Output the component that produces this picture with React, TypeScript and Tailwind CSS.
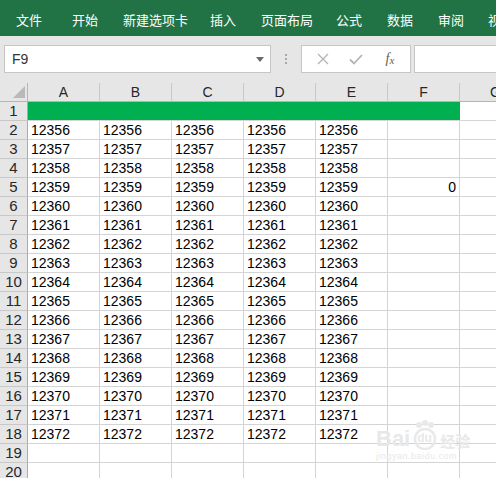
import React from "react";

const tabs: { label: string; w: number }[] = [
  { label: "文件", w: 56 },
  { label: "开始", w: 51 },
  { label: "新建选项卡", w: 87 },
  { label: "插入", w: 51 },
  { label: "页面布局", w: 75 },
  { label: "公式", w: 51 },
  { label: "数据", w: 51 },
  { label: "审阅", w: 50 },
  { label: "视图", w: 40 },
];

const cols = ["A", "B", "C", "D", "E", "F"];

function RowNum({ n }: { n: number }) {
  return (
    <div className="w-[28px] shrink-0 bg-[#e6e6e6] border-r border-b border-r-[#ababab] border-b-[#c8c8c8] text-center text-[15px] leading-[18px] text-[#262626]">
      {n}
    </div>
  );
}

function Cell({ children, right }: { children?: React.ReactNode; right?: boolean }) {
  return (
    <div
      className={
        "w-[72px] shrink-0 border-r border-b border-[#d4d4d4] px-[3px] text-[14px] leading-[18px] text-black whitespace-nowrap overflow-hidden " +
        (right ? "text-right" : "text-left")
      }
    >
      {children}
    </div>
  );
}

export default function App() {
  const rows = Array.from({ length: 19 }, (_, i) => i + 2);
  return (
    <div className="relative w-[496px] h-[478px] overflow-hidden bg-white font-['Liberation_Sans',Arial,sans-serif]">
      {/* Ribbon tabs */}
      <div className="h-[36px] w-[520px] bg-[#217346] flex items-center pt-[3px] pl-[16px] text-white text-[13px] font-['Noto_Sans_CJK_SC',sans-serif] whitespace-nowrap">
        {tabs.map((t) => (
          <span key={t.label} className="shrink-0" style={{ width: t.w }}>
            {t.label}
          </span>
        ))}
      </div>

      {/* Formula bar */}
      <div className="h-[47px] bg-[#e6e6e6] flex items-start pt-[9px] pl-[4px]">
        <div className="w-[267px] h-[28px] bg-white border border-[#c6c6c6] flex items-center justify-between pl-[7px] pr-[6px] text-[14px] text-[#333]">
          <span>F9</span>
          <svg width="8" height="5" viewBox="0 0 8 5">
            <path d="M0 0 L8 0 L4 5 Z" fill="#6a6a6a" />
          </svg>
        </div>
        <div className="w-[30px] h-[28px] flex flex-col items-center justify-center gap-[2px]">
          <span className="w-[2px] h-[2px] bg-[#a8a8a8]" />
          <span className="w-[2px] h-[2px] bg-[#a8a8a8]" />
          <span className="w-[2px] h-[2px] bg-[#a8a8a8]" />
        </div>
        <div className="w-[110px] h-[28px] bg-white border border-[#c6c6c6] flex items-center">
          <div className="w-[37px] flex justify-center pl-[4px]">
            <svg width="12" height="12" viewBox="0 0 12 12">
              <path d="M1 1 L11 11 M11 1 L1 11" stroke="#b4b4b4" strokeWidth="1.3" />
            </svg>
          </div>
          <div className="w-[34px] flex justify-center">
            <svg width="14" height="11" viewBox="0 0 14 11">
              <path d="M1 5.5 L5 9.5 L13 1" stroke="#b4b4b4" strokeWidth="1.8" fill="none" />
            </svg>
          </div>
          <div className="w-[34px] flex justify-center text-[#606060] italic font-['Liberation_Serif',serif] text-[14px] leading-none">
            <span>f</span>
            <span className="text-[11px] mt-[3px]">x</span>
          </div>
        </div>
        <div className="ml-[3px] flex-1 h-[28px] bg-white border border-[#c6c6c6] border-r-0" />
      </div>

      {/* Column headers */}
      <div className="flex h-[19px] w-[560px]">
        <div className="relative w-[28px] shrink-0 bg-[#e6e6e6] border-r border-b border-[#b5b5b5]">
          <svg className="absolute right-[2px] bottom-[3px]" width="12" height="12" viewBox="0 0 12 12">
            <path d="M12 0 L12 12 L0 12 Z" fill="#b9b9b9" />
          </svg>
        </div>
        {[...cols, "G"].map((c) => (
          <div
            key={c}
            className="w-[72px] shrink-0 bg-[#e6e6e6] border-r border-b border-r-[#c8c8c8] border-b-[#b5b5b5] text-center text-[14px] leading-[18px] text-[#262626] whitespace-nowrap"
          >
            {c}
          </div>
        ))}
      </div>

      {/* Row 1 */}
      <div className="flex h-[19px]">
        <RowNum n={1} />
        <div className="w-[432px] shrink-0 bg-[#00b050] border-b border-[#d4d4d4]" />
        <div className="flex-1 border-b border-[#d4d4d4]" />
      </div>

      {rows.map((r) => (
        <div key={r} className="flex h-[19px]">
          <RowNum n={r} />
          {cols.map((c) => {
            if (c === "F") {
              return (
                <Cell key={c} right>
                  {r === 5 ? "0" : ""}
                </Cell>
              );
            }
            return <Cell key={c}>{r <= 18 ? String(12356 + r - 2) : ""}</Cell>;
          })}
          <div className="flex-1 border-b border-[#d4d4d4]" />
        </div>
      ))}

      {/* Baidu watermark */}
      <div className="absolute left-[376px] top-[420px] pointer-events-none select-none">
        <div className="flex items-end gap-[2px] text-[#e8e8e8]">
          <span className="text-[22px] font-bold leading-none font-['Liberation_Sans',sans-serif]">Bai</span>
          <div className="relative w-[26px] h-[30px]">
            <svg width="26" height="30" viewBox="0 0 26 30" className="absolute left-0 top-0">
              <circle cx="7" cy="5" r="3" fill="#e9e9e9" />
              <circle cx="13" cy="3" r="3" fill="#e9e9e9" />
              <circle cx="19" cy="5" r="3" fill="#e9e9e9" />
              <circle cx="13" cy="19" r="10" fill="none" stroke="#e9e9e9" strokeWidth="2.5" />
            </svg>
            <span className="absolute left-[5px] top-[12px] text-[12px] font-bold leading-none">du</span>
          </div>
          <span className="text-[15px] font-bold leading-none mb-[2px] font-['Noto_Sans_CJK_SC',sans-serif]">经验</span>
        </div>
        <div className="text-[9px] leading-none mt-[2px] text-[#e8e8e8] tracking-[0.5px]">jingyan.baidu.com</div>
      </div>
    </div>
  );
}
